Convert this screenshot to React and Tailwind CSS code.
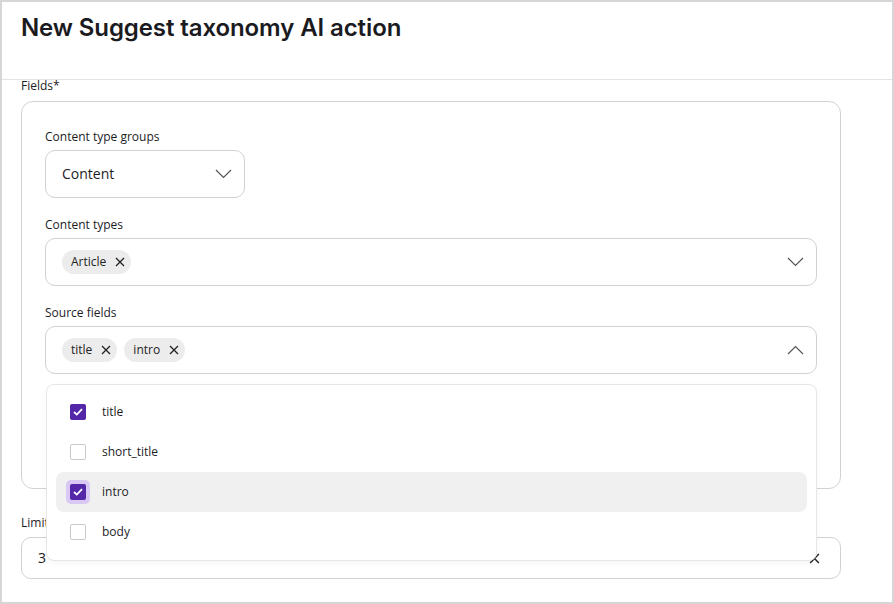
import React from 'react';

const font = { fontFamily: '"Open Sans", "Noto Sans", sans-serif' };

function Chevron({ up = false }) {
  return (
    <svg width="17" height="10" viewBox="0 0 17 10" fill="none" className="shrink-0">
      <path
        d={up ? 'M1 9L8.5 1.5L16 9' : 'M1 1L8.5 8.5L16 1'}
        stroke="#555"
        strokeWidth="1.2"
      />
    </svg>
  );
}

function XIcon({ size = 10 }) {
  return (
    <svg width={size} height={size} viewBox="0 0 10 10" fill="none" className="shrink-0">
      <path d="M1 1L9 9M9 1L1 9" stroke="#222" strokeWidth="1.3" />
    </svg>
  );
}

function Chip({ label }) {
  return (
    <span className="flex h-6 items-center gap-[9px] rounded-full bg-[#ececec] pl-[9px] pr-[6px] text-xs text-[#222]">
      {label}
      <XIcon />
    </span>
  );
}

function Checkbox({ checked, focused }) {
  const box = checked ? (
    <span className="flex h-4 w-4 items-center justify-center rounded-[2px] bg-[#5426a8]">
      <svg width="10" height="8" viewBox="0 0 10 8" fill="none">
        <path d="M1 4L3.8 6.6L9 1.2" stroke="white" strokeWidth="1.8" />
      </svg>
    </span>
  ) : (
    <span className="h-4 w-4 rounded-[2px] border border-[#c9c9c9] bg-white" />
  );
  if (focused) {
    return <span className="-m-[4px] flex rounded-[5px] bg-[#d9c8f4] p-[4px]">{box}</span>;
  }
  return box;
}

const options = [
  { label: 'title', checked: true },
  { label: 'short_title', checked: false },
  { label: 'intro', checked: true, active: true },
  { label: 'body', checked: false },
];

export default function App() {
  return (
    <div
      className="flex h-[604px] w-[894px] flex-col overflow-hidden border-2 border-[#d6d6d6] bg-white text-[#1d1d1f]"
      style={font}
    >
      <header className="h-[78px] shrink-0 border-b border-[#e3e3e3] px-[19px] pt-[10px]">
        <h1
          className="text-[24px] leading-8 font-semibold tracking-[-0.1px] text-[#1b1b1f]"
          style={{ fontFamily: 'Inter, sans-serif' }}
        >
          New Suggest taxonomy AI action
        </h1>
      </header>

      <div className="flex-1 overflow-hidden px-[19px]">
        <div className="-mt-[2px] text-xs leading-4 font-medium">Fields*</div>

        <div className="mt-[7px] h-[388px] w-[820px] rounded-xl border border-[#d2d2d2] px-[23px] pt-[27px]">
          <div className="text-xs leading-4 font-medium">Content type groups</div>
          <div className="mt-[5px] flex h-12 w-[200px] items-center justify-between rounded-[10px] border border-[#d2d2d2] pr-[12px] pl-4 text-sm">
            Content
            <Chevron />
          </div>

          <div className="mt-[19px] text-xs leading-4 font-medium">Content types</div>
          <div className="mt-[5px] flex h-12 items-center justify-between rounded-[10px] border border-[#d2d2d2] pr-[12px] pl-4">
            <div className="flex gap-[7px]">
              <Chip label="Article" />
            </div>
            <Chevron />
          </div>

          <div className="mt-[19px] text-xs leading-4 font-medium">Source fields</div>
          <div className="relative mt-[5px]">
            <div className="flex h-12 items-center justify-between rounded-[10px] border border-[#d2d2d2] pr-[12px] pl-4">
              <div className="flex gap-[7px]">
                <Chip label="title" />
                <Chip label="intro" />
              </div>
              <Chevron up />
            </div>

            <ul className="absolute top-[58px] right-0 left-[1px] z-10 rounded-lg border border-[#e6e6e6] bg-white px-[9px] pt-[7px] pb-[8px] shadow-[0_2px_6px_rgba(0,0,0,0.04)]">
              {options.map(o => (
                <li
                  key={o.label}
                  className={`flex h-10 items-center gap-4 rounded-lg pl-[14px] text-xs ${
                    o.active ? 'bg-[#f0f0f0]' : ''
                  }`}
                >
                  <Checkbox checked={o.checked} focused={o.active} />
                  {o.label}
                </li>
              ))}
            </ul>
          </div>
        </div>

        <div className="mt-[26px] text-xs leading-4 font-medium">Limit</div>
        <div className="mt-[6px] flex h-[42px] w-[820px] items-center justify-between rounded-[10px] border border-[#d2d2d2] pr-[20px] pl-4 text-sm">
          3
          <XIcon size={11} />
        </div>
      </div>
    </div>
  );
}
